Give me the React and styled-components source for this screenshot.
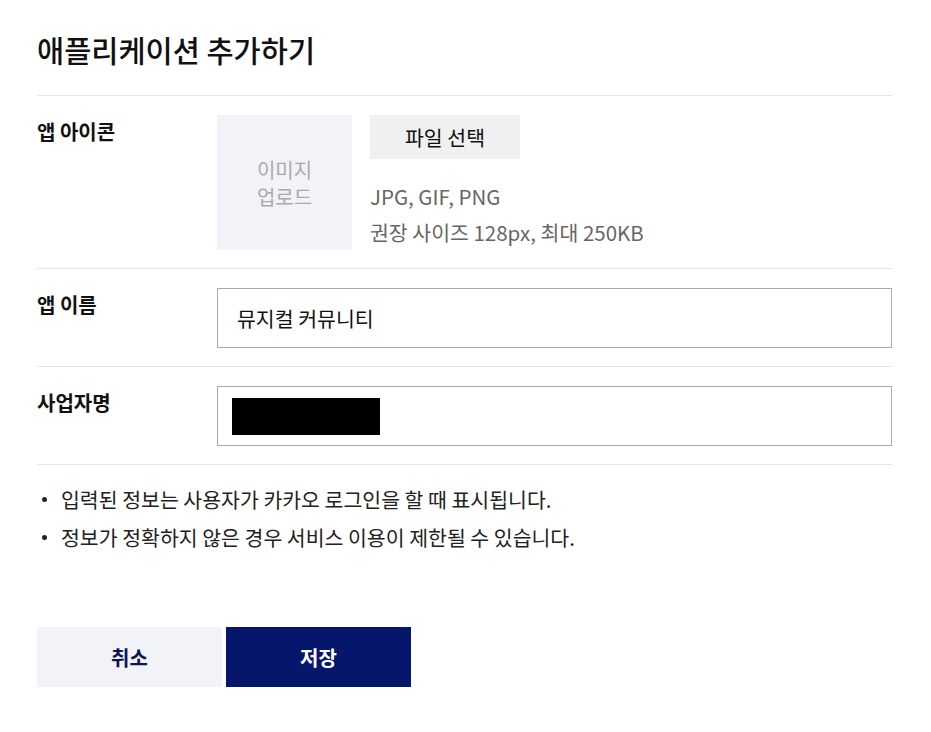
import React from 'react'
import styled, { createGlobalStyle } from 'styled-components'

const GlobalStyle = createGlobalStyle`
  body {
    margin: 0;
    background: #fff;
    font-family: "Noto Sans CJK KR", "Noto Sans", sans-serif;
    color: #111;
  }
`;

const Page = styled.div`
  width: 855px;
  padding: 0 39px 0 37px;
`;

const Title = styled.h1`
  margin: 0;
  padding: 29px 0 26px;
  font-size: 29.5px;
  line-height: 40px;
  font-weight: 500;
  color: #111;
  border-bottom: 1px solid #e5e5e5;
`;

const Row = styled.div`
  display: flex;
  padding: 19px 0 18px;
  border-bottom: 1px solid #e5e5e5;
`;

const Label = styled.div`
  width: 180px;
  flex-shrink: 0;
  font-size: 20px;
  font-weight: 700;
  line-height: 34px;
`;

const UploadBox = styled.div`
  width: 135px;
  height: 135px;
  background: #f2f3f8;
  color: #aaa;
  font-size: 20px;
  line-height: 27px;
  display: flex;
  align-items: center;
  justify-content: center;
  text-align: center;
`;

const IconSide = styled.div`
  display: flex;
  flex-direction: column;
  align-items: flex-start;
  margin-left: 18px;
`;

const FileButton = styled.button`
  width: 150px;
  height: 44px;
  border: none;
  background: #f0f0f0;
  font-family: inherit;
  font-size: 20.5px;
  color: #111;
  cursor: pointer;
`;

const Hint = styled.div`
  margin-top: 19px;
  font-size: 20.5px;
  line-height: 36px;
  color: #666;
`;

const Field = styled.div`
  flex: 1;
  height: 58px;
  border: 1px solid #aaa;
  display: flex;
  align-items: center;
  padding: 0 19px 0 14px;
  font-size: 20.5px;
`;

const FieldText = styled.span`
  margin-left: 5px;
`;

const Redacted = styled.span`
  width: 148px;
  height: 37px;
  background: #000;
`;

const Notes = styled.ul`
  list-style: none;
  margin: 0;
  padding: 15px 0 0;
`;

const Note = styled.li`
  position: relative;
  padding-left: 24px;
  font-size: 20.5px;
  line-height: 38px;
  color: #222;

  &::before {
    content: '';
    position: absolute;
    left: 5px;
    top: 17px;
    width: 5px;
    height: 5px;
    border-radius: 50%;
    background: #222;
  }
`;

const Actions = styled.div`
  display: flex;
  gap: 4px;
  margin-top: 71px;
`;

const ActionButton = styled.button`
  width: 185px;
  height: 60px;
  border: none;
  font-family: inherit;
  font-size: 20px;
  font-weight: 700;
  background: ${({ $primary }) => ($primary ? '#05166b' : '#f2f3f8')};
  color: ${({ $primary }) => ($primary ? '#fff' : '#0b1654')};
  cursor: pointer;
`;

export default function App() {
  return (
    <Page>
      <GlobalStyle />
      <Title>애플리케이션 추가하기</Title>
      <Row>
        <Label>앱 아이콘</Label>
        <UploadBox>
          이미지
          <br />
          업로드
        </UploadBox>
        <IconSide>
          <FileButton>파일 선택</FileButton>
          <Hint>
            JPG, GIF, PNG
            <br />
            권장 사이즈 128px, 최대 250KB
          </Hint>
        </IconSide>
      </Row>
      <Row>
        <Label>앱 이름</Label>
        <Field>
          <FieldText>뮤지컬 커뮤니티</FieldText>
        </Field>
      </Row>
      <Row>
        <Label>사업자명</Label>
        <Field>
          <Redacted />
        </Field>
      </Row>
      <Notes>
        <Note>입력된 정보는 사용자가 카카오 로그인을 할 때 표시됩니다.</Note>
        <Note>정보가 정확하지 않은 경우 서비스 이용이 제한될 수 있습니다.</Note>
      </Notes>
      <Actions>
        <ActionButton>취소</ActionButton>
        <ActionButton $primary>저장</ActionButton>
      </Actions>
    </Page>
  )
}
